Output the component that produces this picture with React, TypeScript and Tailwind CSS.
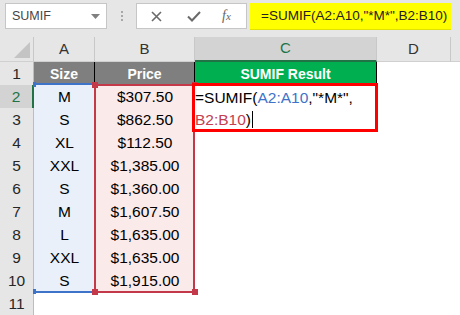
import React from "react";

const rows: [string, string][] = [
  ["M", "$307.50"],
  ["S", "$862.50"],
  ["XL", "$112.50"],
  ["XXL", "$1,385.00"],
  ["S", "$1,360.00"],
  ["M", "$1,607.50"],
  ["L", "$1,635.00"],
  ["XXL", "$1,635.00"],
  ["S", "$1,915.00"],
];

function Toolbar() {
  return (
    <div className="h-[37px] bg-[#e6e6e6] flex items-start pt-[3px]">
      <div className="ml-[5px] w-[102px] h-[26px] bg-white border border-[#c6c6c6] flex items-center justify-between pl-[6px] pr-[6px]">
        <span className="text-[12.5px] text-[#444]">SUMIF</span>
        <svg width="9" height="5" viewBox="0 0 9 5">
          <polygon points="0,0 9,0 4.5,5" fill="#808080" />
        </svg>
      </div>
      <div className="ml-[14px] mt-[8px] flex flex-col gap-[2px]">
        <div className="w-[2px] h-[2px] bg-[#a8a8a8]" />
        <div className="w-[2px] h-[2px] bg-[#a8a8a8]" />
        <div className="w-[2px] h-[2px] bg-[#a8a8a8]" />
      </div>
      <div className="ml-[13px] w-[111px] h-[26px] bg-white border border-[#c6c6c6] flex items-center">
        <svg className="ml-[14px]" width="11" height="11" viewBox="0 0 11 11">
          <path d="M1 1 L10 10 M10 1 L1 10" stroke="#6a6a6a" strokeWidth="1.6" />
        </svg>
        <svg className="ml-[25px]" width="14" height="11" viewBox="0 0 14 11">
          <path d="M1 5.5 L5 9.5 L13 1" stroke="#6a6a6a" strokeWidth="2" fill="none" />
        </svg>
        <span className="ml-[21px] font-['Liberation_Serif',serif] italic text-[#666] text-[14px] leading-none">
          f<span className="text-[11px]">x</span>
        </span>
      </div>
      <div className="ml-[3px] w-[201px] h-[27px] bg-[#ffff00] border-b border-[#e2e200] flex items-center pl-[11px]">
        <span className="text-[13.5px] text-[#222] whitespace-nowrap">=SUMIF(A2:A10,"*M*",B2:B10)</span>
      </div>
    </div>
  );
}

const colTemplate = "grid grid-cols-[34px_61px_100px_182px_74px_1fr]";

function HeaderRow() {
  return (
    <div className={`${colTemplate} h-[25px] text-[15px] text-[#333]`}>
      <div className="bg-[#e6e6e6] border-r border-[#c8c8c8] border-b border-b-[#d0d0d0] relative">
        <svg className="absolute right-[3px] bottom-[3px]" width="16" height="16" viewBox="0 0 16 16">
          <polygon points="16,0 16,16 0,16" fill="#c4c4c4" />
        </svg>
      </div>
      <div className="bg-[#e6e6e6] border-r border-[#c8c8c8] border-b border-b-[#d0d0d0] flex items-center justify-center">A</div>
      <div className="bg-[#e6e6e6] border-r border-[#c8c8c8] border-b border-b-[#d0d0d0] flex items-center justify-center">B</div>
      <div className="bg-[#d3d3d3] border-r border-[#c8c8c8] border-b-2 border-b-[#217346] flex items-center justify-center text-[#217346]">C</div>
      <div className="bg-[#e6e6e6] border-r border-[#c8c8c8] border-b border-b-[#d0d0d0] flex items-center justify-center">D</div>
      <div className="bg-[#e6e6e6] border-b border-b-[#d0d0d0]" />
    </div>
  );
}

function RowHeader({ n, sel }: { n: number; sel?: boolean }) {
  return sel ? (
    <div className="bg-[#d3d3d3] border-r-2 border-[#217346] border-b border-b-[#c8c8c8] flex items-center justify-center text-[#217346]">
      {n}
    </div>
  ) : (
    <div className="bg-[#e6e6e6] border-r border-[#bdbdbd] border-b border-b-[#c8c8c8] flex items-center justify-center text-[#262626]">
      {n}
    </div>
  );
}

function Grid() {
  return (
    <div className="text-[15.5px]">
      <HeaderRow />
      <div className={`${colTemplate} h-[23px]`}>
        <RowHeader n={1} />
        <div className="bg-[#7f7f7f] border-r border-black flex items-center justify-center text-white font-bold text-[14px]">Size</div>
        <div className="bg-[#7f7f7f] border-r border-black flex items-center justify-center text-white font-bold text-[14px]">Price</div>
        <div className="bg-[#00b050] border-r border-black flex items-center justify-center text-white font-bold text-[14px]">SUMIF Result</div>
        <div />
        <div />
      </div>
      {rows.map(([size, price], i) => (
        <div key={i} className={`${colTemplate} h-[23px]`}>
          <RowHeader n={i + 2} sel={i === 0} />
          <div className="bg-[#e9f0fa] border-b border-black flex items-center justify-center text-black">{size}</div>
          <div className="bg-[#fbeaea] border-b border-black flex items-center justify-center text-black">{price}</div>
          <div />
          <div />
          <div />
        </div>
      ))}
      <div className={`${colTemplate} h-[23px]`}>
        <RowHeader n={11} />
        <div />
        <div />
        <div />
        <div />
        <div />
      </div>
    </div>
  );
}

function Overlays() {
  return (
    <>
      {/* A2:A10 blue reference */}
      <div className="absolute left-[34px] top-[83px] w-[60px] h-[2px] bg-[#3d73c9]" />
      <div className="absolute left-[34px] top-[291px] w-[60px] h-[2px] bg-[#3d73c9]" />
      <div className="absolute left-[33px] top-[82px] w-[3px] h-[5px] bg-[#3d73c9]" />
      <div className="absolute left-[33px] top-[289px] w-[3px] h-[5px] bg-[#3d73c9]" />
      {/* B2:B10 red reference */}
      <div className="absolute left-[94px] top-[84px] w-[101px] h-[209px] border-2 border-[#c4394a]" />
      <div className="absolute left-[92px] top-[82px] w-[6px] h-[6px] bg-[#c4394a]" />
      <div className="absolute left-[192px] top-[82px] w-[6px] h-[6px] bg-[#c4394a]" />
      <div className="absolute left-[92px] top-[289px] w-[6px] h-[6px] bg-[#c4394a]" />
      <div className="absolute left-[192px] top-[289px] w-[6px] h-[6px] bg-[#c4394a]" />
      {/* Cell editor */}
      <div className="absolute left-[192px] top-[83px] w-[186px] h-[49px] border-[3px] border-[#ff0000] bg-white pl-[0px] text-[15.5px] leading-[21.5px] text-black whitespace-nowrap">
        <div className="pt-[1px]">
          =SUMIF(<span className="text-[#3d73c9]">A2:A10</span>,"*M*",
        </div>
        <div className="flex items-center">
          <span className="text-[#c4404f]">B2:B10</span>)
          <span className="inline-block w-[1px] h-[17px] bg-black ml-[1px]" />
        </div>
      </div>
    </>
  );
}

export default function App() {
  return (
    <div className="relative w-[460px] h-[315px] overflow-hidden bg-white font-['Liberation_Sans',Arial,sans-serif]">
      <Toolbar />
      <Grid />
      <Overlays />
    </div>
  );
}
